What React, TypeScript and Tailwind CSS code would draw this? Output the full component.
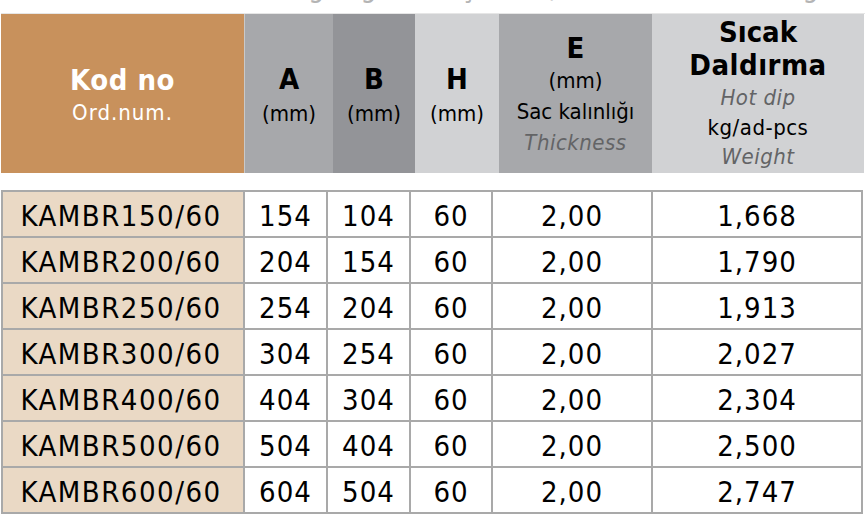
const rows = [
  ["KAMBR150/60", "154", "104", "60", "2,00", "1,668"],
  ["KAMBR200/60", "204", "154", "60", "2,00", "1,790"],
  ["KAMBR250/60", "254", "204", "60", "2,00", "1,913"],
  ["KAMBR300/60", "304", "254", "60", "2,00", "2,027"],
  ["KAMBR400/60", "404", "304", "60", "2,00", "2,304"],
  ["KAMBR500/60", "504", "404", "60", "2,00", "2,500"],
  ["KAMBR600/60", "604", "504", "60", "2,00", "2,747"],
];

const font = { fontFamily: '"DejaVu Sans Condensed", "DejaVu Sans", Verdana, sans-serif' };

export default function App() {
  return (
    <div className="w-[865px] h-[514px] bg-white overflow-hidden relative" style={font}>
      {/* clipped caption above the table */}
      <div className="h-[13px] overflow-hidden">
        <div className="-mt-[30px] pl-[290px] text-[28px] leading-[36px] text-[#b4b4b4] tracking-[1px] whitespace-nowrap">
          Ağırlığı ve ölçüleri (Sıcak Daldırma / kg / ad / pcs)
        </div>
      </div>

      {/* header */}
      <div className="flex h-[160px] ml-px border-t border-[#e6e6e6] text-center leading-[32px]">
        <div className="w-[243px] bg-[#c8915c] text-white flex flex-col items-center justify-center pt-[5px]">
          <div className="text-[29px] font-bold tracking-[0.5px] leading-[34px]">Kod no</div>
          <div className="text-[22px] tracking-[1px]">Ord.num.</div>
        </div>
        <div className="w-[89px] bg-[#a7a8ab] flex flex-col items-center justify-center pt-[2px] border-l border-[#c9c9c9]">
          <div className="text-[29px] font-bold leading-[38px]">A</div>
          <div className="text-[22px]">(mm)</div>
        </div>
        <div className="w-[82px] bg-[#939498] flex flex-col items-center justify-center pt-[2px]">
          <div className="text-[29px] font-bold leading-[38px]">B</div>
          <div className="text-[22px]">(mm)</div>
        </div>
        <div className="w-[84px] bg-[#d1d2d4] flex flex-col items-center justify-center pt-[2px]">
          <div className="text-[29px] font-bold leading-[38px]">H</div>
          <div className="text-[22px]">(mm)</div>
        </div>
        <div className="w-[153px] bg-[#a7a8ab] flex flex-col items-center justify-center pt-[2px]">
          <div className="text-[29px] font-bold leading-[34px]">E</div>
          <div className="text-[22px] leading-[31px]">(mm)</div>
          <div className="text-[22px] leading-[31px]">Sac kalınlığı</div>
          <div className="text-[22px] leading-[31px] italic text-[#636466] tracking-[0.5px]">Thickness</div>
        </div>
        <div className="w-[212px] bg-[#d1d2d4] flex flex-col items-center justify-center">
          <div className="text-[29px] font-bold leading-[33px]">Sıcak</div>
          <div className="text-[29px] font-bold leading-[33px] tracking-[0.5px]">Daldırma</div>
          <div className="text-[22px] leading-[31px] italic text-[#636466] tracking-[0.5px]">Hot dip</div>
          <div className="text-[22px] leading-[29px] tracking-[0.5px]">kg/ad-pcs</div>
          <div className="text-[22px] leading-[30px] italic text-[#636466] tracking-[0.5px]">Weight</div>
        </div>
      </div>

      {/* body */}
      <table className="mt-[17px] ml-px border-collapse text-[29px] leading-[36px] text-black text-center tracking-[1px]">
        <tbody>
          {rows.map((r) => (
            <tr key={r[0]} className="h-[46px]">
              <td className="w-[242px] bg-[#ead9c5] border-2 border-[#a9a9a9] p-0 pt-[4px] pr-[4px] tracking-[1.5px]">{r[0]}</td>
              <td className="w-[83px] border-2 border-[#a9a9a9] p-0 pt-[4px]">{r[1]}</td>
              <td className="w-[83px] border-2 border-[#a9a9a9] p-0 pt-[4px]">{r[2]}</td>
              <td className="w-[82px] border-2 border-[#a9a9a9] p-0 pt-[4px]">{r[3]}</td>
              <td className="w-[160px] border-2 border-[#a9a9a9] p-0 pt-[4px]">{r[4]}</td>
              <td className="w-[210px] border-2 border-[#a9a9a9] p-0 pt-[4px]">{r[5]}</td>
            </tr>
          ))}
        </tbody>
      </table>
    </div>
  );
}
